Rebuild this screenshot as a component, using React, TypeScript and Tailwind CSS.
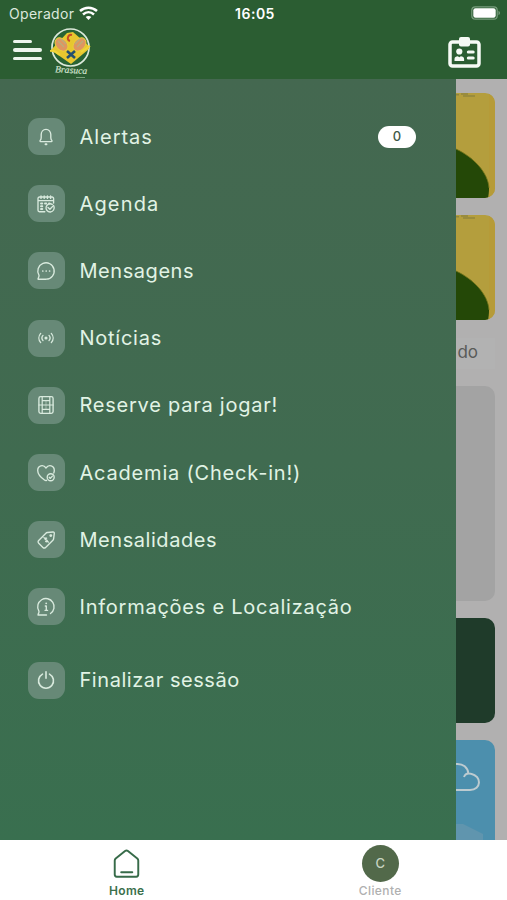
import type { ReactNode } from "react";

type Item = { label: string; tracking: string; icon: ReactNode; badge?: string };

const Glyph = ({ children }: { children: ReactNode }) => (
  <svg width="20" height="20" viewBox="0 0 20 20" fill="none" stroke="#d9eade" strokeWidth="1.350" strokeLinecap="round" strokeLinejoin="round">
    {children}
  </svg>
);

const bell = (
  <Glyph>
    <path d="M4.600 14.600h10.800c.7 0 .8-.7.4-1.200-.7-.8-1-1.700-1-3V7.600C14.800 4.700 12.800 2.300 10 2.300S5.200 4.700 5.200 7.600v2.800c0 1.300-.3 2.200-1 3-.4.500-.3 1.200.4 1.200Z" />
    <path d="M9.500 17.200h1" strokeWidth="1.900" />
  </Glyph>
);

const calendar = (
  <Glyph>
    <path d="M8.800 17.700H3.400a1.400 1.400 0 0 1-1.400-1.400V4.400A1.400 1.400 0 0 1 3.400 3h12.800a1.400 1.400 0 0 1 1.400 1.400V9M2 6.600h15.600M5 2v2.400M8.200 2v2.400M11.400 2v2.400M14.600 2v2.400" />
    <path d="M5 9.500h1.300M9 9.500h1.300M5 12.300h1.300M5 15h1.300M13 9.500h.6" strokeWidth="1.900" />
    <path d="M17.900 12.300a4.100 4.100 0 1 1-1.600-1.900" />
    <path d="m12 13.400 1.900 1.900 3.700-3.900" />
  </Glyph>
);

const chat = (
  <Glyph>
    <path d="M2 18.200h8.300A8.200 8.200 0 1 0 3 14.300c.3.800-.2 1.600-.5 2.300-.2.600-.4 1.100-.5 1.600Z" />
    <path d="M6.800 10h.01M10.200 10h.01M13.600 10h.01" strokeWidth="1.700" />
  </Glyph>
);

const broadcast = (
  <Glyph>
    <path d="M4.700 5.400c-2.400 2.700-2.400 6.500 0 9.200M15.300 5.400c2.400 2.700 2.400 6.500 0 9.200M7 7.400c-1.400 1.600-1.400 3.600 0 5.200M13 7.400c1.400 1.600 1.400 3.600 0 5.200" />
    <circle cx="10" cy="10" r=".9" fill="#d9eade" />
  </Glyph>
);

const court = (
  <Glyph>
    <rect x="2.900" y="1.600" width="14.200" height="16.800" rx="1.800" />
    <path d="M6.200 1.600v16.800M13.800 1.600v16.800M2.900 10h14.200M6.200 5.700h7.600M6.200 14.300h7.600" strokeWidth="1.200" />
    <path d="M10 5.700v8.600" strokeWidth=".5" />
  </Glyph>
);

const heart = (
  <Glyph>
    <path d="M10.600 17.300c-.6.300-1.200.3-1.800-.1C4.800 14.500 1.700 11.200 1.700 7.500 1.700 2.500 7.300 1 10 5c2.700-4 8.300-2.500 8.300 2.500 0 1-.2 1.700-.5 2.500" />
    <circle cx="14.700" cy="14.200" r="3.500" />
    <path d="m13.200 14.300 1.100 1.100 2.100-2.300" />
  </Glyph>
);

const tag = (
  <Glyph>
    <path d="M11.300 2.500 17 2a1.200 1.200 0 0 1 1.300 1.300l-.7 5.500c-.1.600-.3 1-.7 1.400l-7.300 7.200c-.8.800-1.900.8-2.700 0l-4.200-4.200c-.8-.8-.8-1.900 0-2.700L9.900 3.200c.4-.4.800-.600 1.400-.700Z" />
    <circle cx="14.800" cy="5.600" r=".8" fill="#d9eade" />
    <path d="m8 7.600 4.400 4.500M10.600 8.200c-.9-.7-2 .3-1.400 1.200.5.700 1.300.100 1.900.9.500.8-.4 1.800-1.400 1.200" />
  </Glyph>
);

const info = (
  <Glyph>
    <path d="M10.500 18H2c.1-.900.500-1.600.8-2.300.3-.7.400-1.200 0-1.900a8.200 8.200 0 1 1 11.700 2.700" />
    <path d="M9.300 9h1v4.300M9 13.300h2.600" />
    <path d="M10.200 6.300h.01" strokeWidth="1.800" />
  </Glyph>
);

const power = (
  <Glyph>
    <path d="M6.500 4.100a7.500 7.500 0 1 0 7 0M10 1.800v6.500" strokeWidth="1.600" />
  </Glyph>
);

const items: Item[] = [
  { label: "Alertas", tracking: "tracking-[0.95px]", icon: bell, badge: "0" },
  { label: "Agenda", tracking: "tracking-[1.15px]", icon: calendar },
  { label: "Mensagens", tracking: "tracking-[0.55px]", icon: chat },
  { label: "Notícias", tracking: "tracking-[0.75px]", icon: broadcast },
  { label: "Reserve para jogar!", tracking: "tracking-[0.76px]", icon: court },
  { label: "Academia (Check-in!)", tracking: "tracking-[0.8px]", icon: heart },
  { label: "Mensalidades", tracking: "tracking-[0.55px]", icon: tag },
  { label: "Informações e Localização", tracking: "tracking-[0.76px]", icon: info },
];

function MenuRow({ label, tracking, icon, badge }: Item) {
  return (
    <div className="flex h-[67.2px] items-center pr-10 pl-[27.500px]">
      <span className="flex size-[37px] shrink-0 items-center justify-center rounded-[11px] bg-[#678977]">{icon}</span>
      <span className={`ml-[15px] whitespace-nowrap text-[20px] leading-7 text-[#e1f3e5] ${tracking}`}>{label}</span>
      {badge && (
        <span className="ml-auto flex h-[22px] w-[38px] items-center justify-center rounded-full bg-white text-[13px] font-medium text-[#3f5849]">{badge}</span>
      )}
    </div>
  );
}

function Crest() {
  return (
    <svg width="42" height="52" viewBox="0 0 42 52" className="ml-[9px]">
      <circle cx="20.500" cy="20.500" r="18.500" fill="#286334" stroke="#dce9da" strokeWidth="1.700" />
      <path d="m1 23 16-17 6-1 16 14 0 3-18 15Z" fill="#e7c72f" />
      <g stroke="#e9cf39" strokeWidth="1">
        <ellipse cx="11.500" cy="17.500" rx="5.500" ry="7.500" fill="#df9561" transform="rotate(-43 11.500 17.500)" />
        <ellipse cx="29.500" cy="17.500" rx="5.500" ry="7.500" fill="#df9561" transform="rotate(43 29.500 17.500)" />
      </g>
      <path d="m8 14 6 6m-3-8 5 5m17-3-6 6m3-8-5 5" stroke="#b9ae7a" strokeWidth="1.200" />
      <path d="m17 24 8 7m0-7-8 7" stroke="#24506f" strokeWidth="2.600" />
      <path d="M22 8c-4-1-6 5-2 6" fill="none" stroke="#c74b26" strokeWidth="2" />
      <path d="M0 24c4-1 6 1 10 4M31 25l9-6" stroke="#f0d438" strokeWidth="2" fill="none" />
      <text x="5" y="46" fontSize="9.500" fontStyle="italic" fontFamily="Liberation Serif, serif" fill="#d3e2d0" stroke="#d3e2d0" strokeWidth=".2" textLength="32" transform="rotate(3 20 46)">Brasuca</text>
      <path d="M26 50.500h9" stroke="#9ebd9f" strokeWidth=".7" />
    </svg>
  );
}

function Header() {
  return (
    <header className="h-[79px] shrink-0 bg-[#2b5d32] text-white">
      <div className="grid h-[27px] grid-cols-3 items-center pr-[6px] pl-[9px]">
        <div className="flex items-center gap-[5px]">
          <span className="text-[14px] tracking-[0.3px] text-[#dce8dd]">Operador</span>
          <svg width="19" height="15" viewBox="0 0 19 15" fill="none" stroke="#fff" strokeWidth="2.500">
            <path d="M1 5c5-4.500 12-4.500 17 0M4 8.500c3.300-3 7.700-3 11 0" />
            <path d="m9.500 14-2.800-3c1.600-1.500 4-1.500 5.600 0Z" fill="#fff" stroke="none" />
          </svg>
        </div>
        <span className="text-center text-[14px] font-semibold tracking-[0.5px]">16:05</span>
        <svg width="30" height="14" viewBox="0 0 30 14" className="mb-px justify-self-end">
          <rect x=".8" y=".8" width="25.400" height="12.400" rx="3.500" fill="none" stroke="#789d7d" strokeWidth="1.200" />
          <rect x="2.300" y="2.200" width="22.400" height="9.600" rx="2.200" fill="#fff" />
          <path d="M27.500 4.800v4.400c2-.8 2-3.600 0-4.400Z" fill="#789d7d" />
        </svg>
      </div>
      <div className="flex h-[52px] items-center pr-[26px] pl-[13px]">
        <div className="flex w-[28px] flex-col gap-[5px] pb-[6px]">
          <span className="h-[3.500px] w-[19px] rounded-full bg-[#edf5ed]" />
          <span className="h-[3.500px] w-[29px] rounded-full bg-[#edf5ed]" />
          <span className="h-[3.500px] w-[29px] rounded-full bg-[#edf5ed]" />
        </div>
        <Crest />
        <svg width="33" height="31" viewBox="0 0 33 31" className="mb-[2px] ml-auto">
          <rect x="2" y="5" width="29" height="24" rx="2.500" fill="none" stroke="#f6faf5" strokeWidth="3.500" />
          <rect x="11" y="0" width="11" height="9.500" rx="2" fill="#f6faf5" />
          <circle cx="11.300" cy="14.500" r="3.100" fill="#f6faf5" />
          <path d="M6.500 24v-2c0-2 1.500-2.800 3.300-2.800l1.500 1 1.500-1c1.800 0 3.300.8 3.300 2.800v2Z" fill="#f6faf5" />
          <path d="M20.300 15h4.900M20.300 21h4.900" stroke="#f6faf5" strokeWidth="3" strokeLinecap="round" />
        </svg>
      </div>
    </header>
  );
}

function CourtCard() {
  return (
    <svg width="39" height="105" viewBox="0 0 39 105" className="block rounded-r-[10px]">
      <rect width="39" height="105" fill="#b49e3d" />
      <path d="M33 0h6v105h-6Z" fill="#b69b38" />
      <path d="M0 56c17 8 32 23 33 39 0 4-.5 8-1 10H0Z" fill="#244807" />
      <path d="M0 56c17 8 32 23 33 39" fill="none" stroke="#71751b" strokeWidth=".8" />
      <path d="M0 1.800h3m2-.8h7m-5 2h12" stroke="#73713d" strokeWidth=".8" />
    </svg>
  );
}

function PageBehind() {
  return (
    <div className="w-[51px] overflow-hidden bg-[#b1b0b0] pt-[13.500px]">
      <CourtCard />
      <div className="h-[17px]" />
      <CourtCard />
      <div className="mt-[18px] flex h-[31px] w-[39px] items-center justify-end bg-[#b2b2b2] pr-[17px] text-[17px] text-[#595b59]">do</div>
      <div className="mt-[17px] h-[215px] w-[39px] rounded-r-[10px] bg-[#a3a3a3]" />
      <div className="mt-[17px] h-[105px] w-[39px] rounded-r-[10px] bg-[#1f3b2a]" />
      <svg width="39" height="105" viewBox="0 0 39 105" className="mt-[17px] block rounded-tr-[10px]">
        <rect width="39" height="105" fill="#4c8fad" />
        <path d="M0 24c7-.7 12 3.500 12.500 10M8 37c1-3 4-4 7-3.300 11 2.300 10.500 16.300-1 16.300H0" fill="none" stroke="#bdcbd0" strokeWidth="2" />
        <path d="M0 84h7l20 10v11H0Z" fill="#6095ae" />
      </svg>
    </div>
  );
}

function TabBar() {
  return (
    <nav className="grid h-[60px] shrink-0 grid-cols-2 bg-white">
      <div className="flex flex-col items-center pt-[8px]">
        <svg width="27" height="31" viewBox="0 0 28 31" fill="none" stroke="#376b49" strokeWidth="2" strokeLinecap="round" strokeLinejoin="round">
          <path d="M1.800 12.500c0-1 .3-1.500 1-2.200L12.500 2.500c1-.8 2-.8 3 0l9.700 7.800c.7.700 1 1.200 1 2.200V27c0 1.700-.8 2.200-2 2.200H3.800c-1.200 0-2-.5-2-2.200Z" />
          <path d="M8.500 24.500h11.500" />
        </svg>
        <span className="mt-[5px] text-[12px] leading-[14px] font-semibold tracking-[0.3px] text-[#3b704c]">Home</span>
      </div>
      <div className="flex flex-col items-center pt-[5px]">
        <span className="flex size-[37px] items-center justify-center rounded-full bg-[#52694a] text-[13px] font-medium text-[#c7d3c1]">C</span>
        <span className="mt-[2px] text-[12px] leading-[14px] font-medium tracking-[0.4px] text-[#b0b0b0]">Cliente</span>
      </div>
    </nav>
  );
}

export default function App() {
  return (
    <div className="flex h-[900px] w-[507px] flex-col overflow-hidden font-['Inter','Liberation_Sans',sans-serif]">
      <Header />
      <main className="flex min-h-0 flex-1">
        <aside className="w-[456px] bg-linear-to-b from-[#446850] via-[#406b50] to-[#396f4f] pt-[24px]">
          {items.map((item) => (
            <MenuRow key={item.label} {...item} />
          ))}
          <div className="mt-[6px]">
            <MenuRow label="Finalizar sessão" tracking="tracking-[0.56px]" icon={power} />
          </div>
        </aside>
        <PageBehind />
      </main>
      <TabBar />
    </div>
  );
}
